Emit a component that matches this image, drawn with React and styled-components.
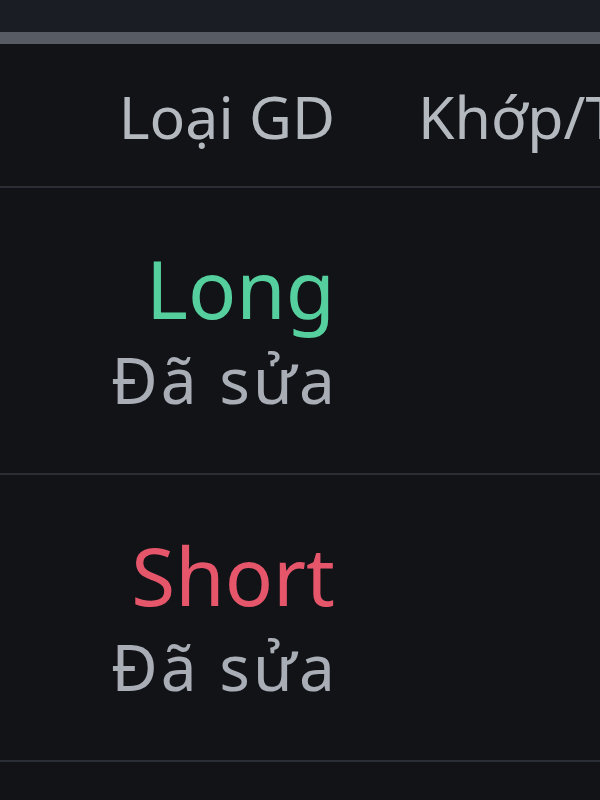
import React from 'react'
import styled, {createGlobalStyle} from 'styled-components'

const GlobalStyle = createGlobalStyle`
  html, body {
    margin: 0;
    padding: 0;
    background: #111317;
  }
  body {
    font-family: "Noto Sans", "Liberation Sans", sans-serif;
    overflow: hidden;
  }
`

const orders = [
    {id: 1, side: 'Long', status: 'Đã sửa'},
    {id: 2, side: 'Short', status: 'Đã sửa'},
]

const App = () => {
    return (
        <Page>
            <GlobalStyle/>
            <TopBand/>
            <Divider/>
            <Table>
                <HeadRow>
                    <HeadCell>Loại GD</HeadCell>
                    <HeadCell left>Khớp/TB</HeadCell>
                </HeadRow>
                {orders.map((order) => (
                    <Row key={order.id}>
                        <SideCell>
                            <Side long={order.side === 'Long' ? 1 : 0}>{order.side}</Side>
                            <Status>{order.status}</Status>
                        </SideCell>
                        <div/>
                    </Row>
                ))}
            </Table>
        </Page>
    )
}

const Page = styled.div`
  width: 600px;
  height: 800px;
  overflow: hidden;
  background: #111317;
`

const TopBand = styled.div`
  height: 32px;
  background: #1b1d25;
`

const Divider = styled.div`
  height: 12px;
  background: #575b63;
`

const Table = styled.div`
  width: 900px;
`

const HeadRow = styled.div`
  display: grid;
  grid-template-columns: 335px 1fr;
  column-gap: 83px;
  align-items: center;
  height: 142px;
  border-bottom: 2px solid #2b2e35;
`

const HeadCell = styled.div`
  font-size: 59px;
  line-height: 1.2;
  color: #b4b8bf;
  text-align: ${(p) => (p.left ? 'left' : 'right')};
  white-space: nowrap;
  padding-top: 2px;
`

const Row = styled.div`
  display: grid;
  grid-template-columns: 335px 1fr;
  column-gap: 83px;
  align-items: center;
  height: 285px;
  border-bottom: 2px solid #2b2e35;
`

const SideCell = styled.div`
  display: flex;
  flex-direction: column;
  align-items: flex-end;
  gap: 6px;
`

const Side = styled.div`
  font-size: 80px;
  line-height: 1.15;
  color: ${(p) => (p.long ? '#55cf9d' : '#e5566b')};
`

const Status = styled.div`
  font-size: 64px;
  line-height: 1.25;
  color: #a9adb5;
  letter-spacing: 3px;
  margin-right: -3px;
`

export default App
